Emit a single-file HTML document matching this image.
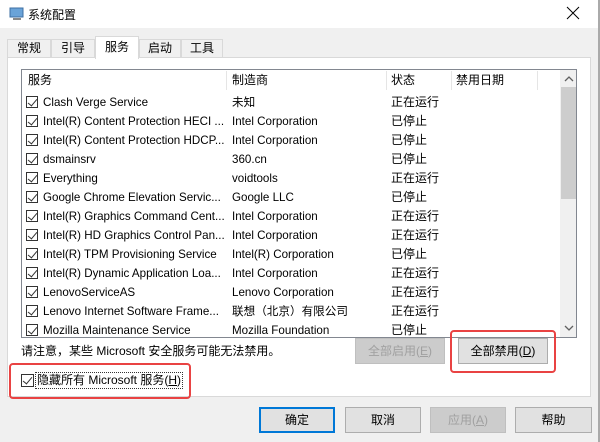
<!DOCTYPE html><html><head><meta charset="utf-8"><style>
*{box-sizing:border-box;margin:0;padding:0}
body{width:600px;height:442px;background:#f0f0f0;font-family:"Liberation Sans","Noto Sans CJK SC",sans-serif;font-size:12px;color:#000;position:relative;overflow:hidden}
.a{position:absolute}
.title{left:0;top:0;width:600px;height:28px;background:#fff}
.tab{top:39px;height:19px;border:1px solid #d9d9d9;border-bottom:none;background:#f0f0f0;text-align:center;line-height:17px}
.panel{left:7px;top:57px;width:584px;height:340px;background:#fff;border:1px solid #d9d9d9}
.lv{left:21px;top:69px;width:556px;height:269px;border:1px solid #828790;background:#fff;overflow:hidden}
.row{position:absolute;left:0;height:19px;line-height:19px;white-space:nowrap;font-size:11.6px}
.cb{position:absolute;width:12px;height:12px;border:1px solid #333;background:#fff}
.cb:after{content:"";position:absolute;left:3px;top:0px;width:4px;height:8px;border:solid #333;border-width:0 1.3px 1.3px 0;transform:rotate(40deg)}
.btn{height:26px;border:1px solid #adadad;background:#e1e1e1;text-align:center;line-height:24px}
.red{border:2px solid #e94343;border-radius:4px}
</style></head><body>
<div class="a title"></div>
<svg class="a" style="left:9px;top:6px" width="16" height="16"><rect x="1" y="2" width="13" height="9" fill="#6aa3d8" stroke="#3d6fa3"/><rect x="4" y="12" width="8" height="2" fill="#888"/></svg>
<div class="a" style="left:28px;top:6px;font-size:12px">系统配置</div>
<svg class="a" style="left:566px;top:6px" width="14" height="14"><path d="M1 1L13 13M13 1L1 13" stroke="#000" stroke-width="1"/></svg>
<div class="a tab" style="left:7px;width:44px">常规</div>
<div class="a tab" style="left:51px;width:44px">引导</div>
<div class="a tab" style="left:181px;width:42px">工具</div>
<div class="a tab" style="left:139px;width:42px">启动</div>
<div class="a panel"></div>
<div class="a tab" style="left:95px;top:36px;width:44px;height:23px;background:#fff;line-height:20px;z-index:2">服务</div>
<div class="a lv">
<div class="row" style="top:0;width:556px;height:21px;line-height:21px;font-size:12px">
<span class="a" style="left:6px">服务</span><span class="a" style="left:210px">制造商</span><span class="a" style="left:369px">状态</span><span class="a" style="left:434px">禁用日期</span>
<span class="a" style="left:204px;top:1px;width:1px;height:19px;background:#e5e5e5"></span>
<span class="a" style="left:364px;top:1px;width:1px;height:19px;background:#e5e5e5"></span>
<span class="a" style="left:429px;top:1px;width:1px;height:19px;background:#e5e5e5"></span>
<span class="a" style="left:515px;top:1px;width:1px;height:19px;background:#e5e5e5"></span>
</div>
<div class="a" style="left:538px;top:0;width:17px;height:267px;background:#f0f0f0"></div>
<div class="a" style="left:539px;top:17px;width:15px;height:112px;background:#cdcdcd"></div>
<svg class="a" style="left:542px;top:5px" width="10" height="8"><path d="M1 6L5 2L9 6" fill="none" stroke="#606060" stroke-width="1.3"/></svg>
<svg class="a" style="left:542px;top:254px" width="10" height="8"><path d="M1 2L5 6L9 2" fill="none" stroke="#606060" stroke-width="1.3"/></svg>
<div id="rows"></div>
</div>
<script>
var d=[["Clash Verge Service","未知","正在运行"],["Intel(R) Content Protection HECI ...","Intel Corporation","已停止"],["Intel(R) Content Protection HDCP...","Intel Corporation","已停止"],["dsmainsrv","360.cn","已停止"],["Everything","voidtools","正在运行"],["Google Chrome Elevation Servic...","Google LLC","已停止"],["Intel(R) Graphics Command Cent...","Intel Corporation","正在运行"],["Intel(R) HD Graphics Control Pan...","Intel Corporation","正在运行"],["Intel(R) TPM Provisioning Service","Intel(R) Corporation","已停止"],["Intel(R) Dynamic Application Loa...","Intel Corporation","正在运行"],["LenovoServiceAS","Lenovo Corporation","正在运行"],["Lenovo Internet Software Frame...","联想（北京）有限公司","正在运行"],["Mozilla Maintenance Service","Mozilla Foundation","已停止"]];
var h="";d.forEach(function(r,i){var t=23+i*19;h+='<div class="row" style="top:'+t+'px;width:538px"><span class="cb" style="left:4px;top:3px"></span><span class="a" style="left:21px">'+r[0]+'</span><span class="a" style="left:210px">'+r[1]+'</span><span class="a" style="left:369px;font-size:12px">'+r[2]+'</span></div>'});
document.getElementById("rows").outerHTML=h;
</script>
<div class="a" style="left:21px;top:342px">请注意，某些 Microsoft 安全服务可能无法禁用。</div>
<div class="a btn" style="left:355px;top:338px;width:90px;color:#a0a0a0;background:#cccccc;border-color:#bfbfbf">全部启用(<u>E</u>)</div>
<div class="a btn" style="left:458px;top:338px;width:90px">全部禁用(<u>D</u>)</div>
<div class="a red" style="left:450px;top:330px;width:106px;height:43px"></div>
<span class="cb a" style="left:21px;top:374px;width:13px;height:13px"></span>
<div class="a" style="left:35px;top:372px;border:1px dotted #333;padding:0 1px;line-height:15px">隐藏所有 Microsoft 服务(<u>H</u>)</div>
<div class="a red" style="left:9px;top:363px;width:182px;height:36px"></div>
<div class="a btn" style="left:259px;top:407px;width:76px;border:1px solid #0078d7;box-shadow:inset 0 0 0 1px #0078d7">确定</div>
<div class="a btn" style="left:345px;top:407px;width:76px">取消</div>
<div class="a btn" style="left:430px;top:407px;width:76px;color:#a0a0a0;background:#cccccc;border-color:#bfbfbf">应用(<u>A</u>)</div>
<div class="a btn" style="left:515px;top:407px;width:77px">帮助</div>
<div class="a" style="left:598px;top:0;width:2px;height:442px;background:#aaa"></div>
</body></html>
